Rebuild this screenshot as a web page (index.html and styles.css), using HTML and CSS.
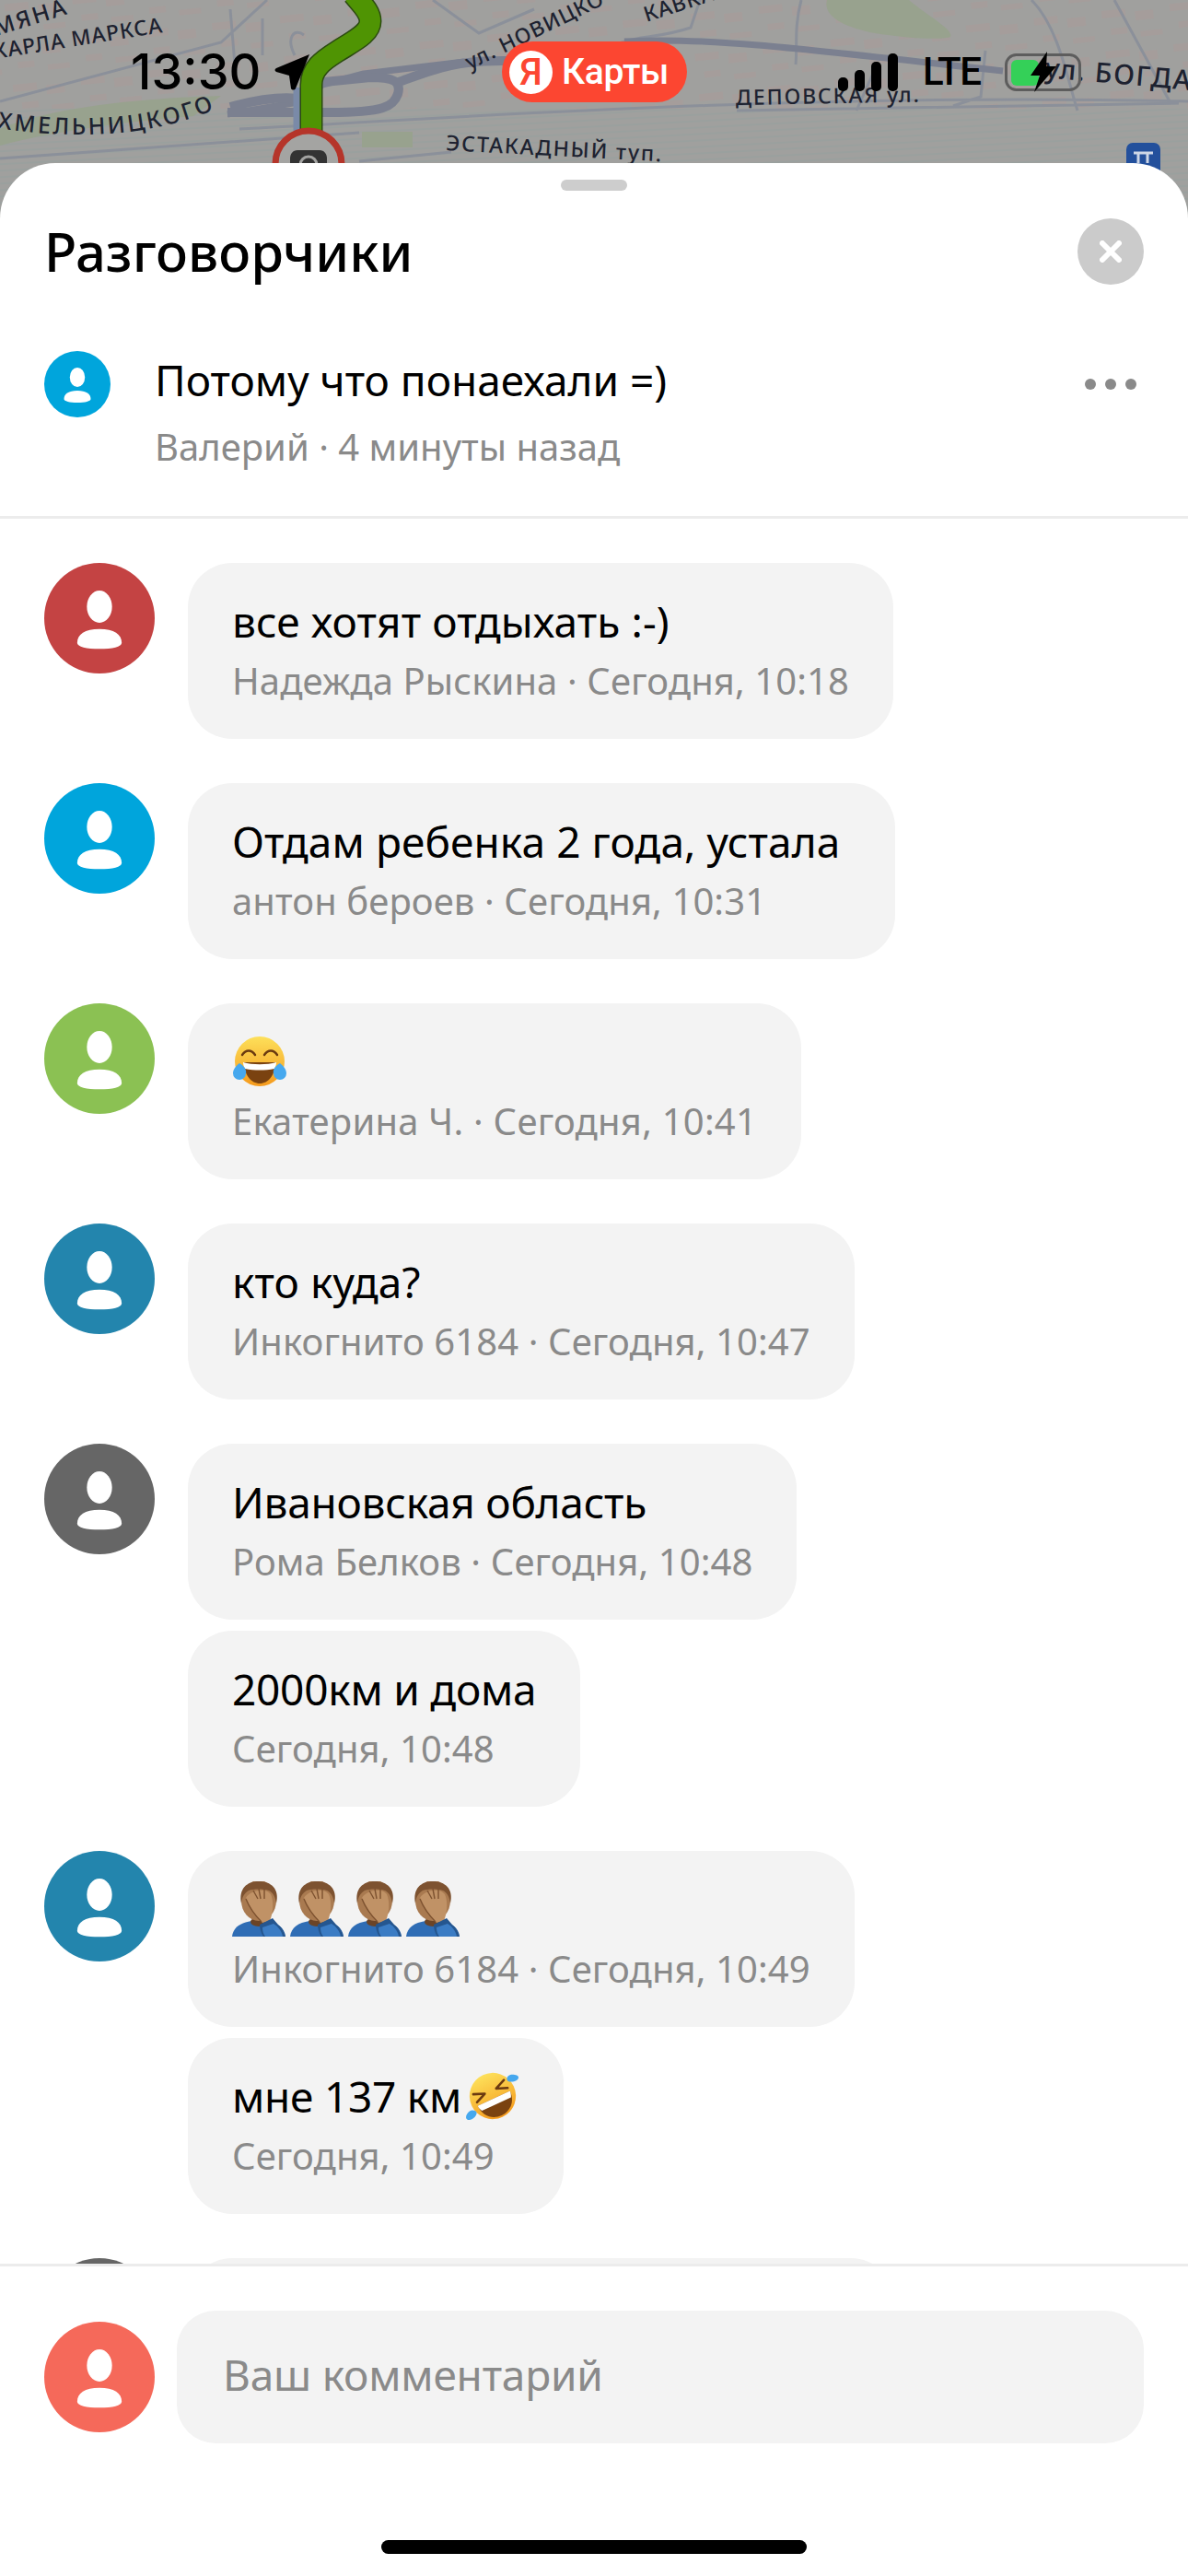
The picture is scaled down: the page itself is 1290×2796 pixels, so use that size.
FILE: index.html
```html
<!DOCTYPE html>
<html lang="ru">
<head>
<meta charset="utf-8">
<title>Разговорчики</title>
<link rel="stylesheet" href="styles.css">
</head>
<body>
<svg class="defs" width="0" height="0" aria-hidden="true">
  <symbol id="person" viewBox="0 0 72 72">
    <ellipse cx="36" cy="28.5" rx="8.2" ry="10.5"/>
    <path d="M21.5 52c0-5.5 5-9 14.5-9s14.5 3.500 14.500 9c0 2.500-6 4-14.500 4s-14.500-1.500-14.500-4z"/>
  </symbol>
  <symbol id="facepalm" viewBox="0 0 58 60">
    <path fill="#2f6db5" d="M0 60c1-10 9-15 21-17h16c12 2 20 7 21 17z"/>
    <ellipse cx="29" cy="44" rx="9" ry="5" fill="#6b4427"/>
    <ellipse cx="29" cy="21" rx="19" ry="22" fill="#a97a50"/>
    <path fill="#7d5230" d="M10 24C7 8 16 0 29 0s23 8 19 24c-1-8-4-12-8-14-7-2-16-2-22 0-5 3-7 7-8 14z"/>
    <path fill="#c09266" d="M15 18c4-8 22-12 27-4 4 9 2 22-1 29l-8 2c-6-7-14-16-18-27z"/>
    <path fill="none" stroke="#7d5230" stroke-width="1.4" d="M23 10l5 9M29 8l2 11M35 9l0 10M15 19c4 10 10 18 17 25"/>
    <path fill="#25568f" d="M30 47l14-7 6 7c4 3 7 8 8 13H34c-3-4-4-9-4-13z"/>
    <path fill="#3b7cc4" d="M33 50l12-4c5 3 9 8 10 14H36c-2-3-3-6-3-10z"/>
  </symbol>
</svg>

<div class="phone">
  <div class="map">
    <svg class="map-art" viewBox="0 0 1290 240" width="1290" height="240" aria-hidden="true">
      <defs>
        <pattern id="blocks" width="74" height="44" patternUnits="userSpaceOnUse" patternTransform="rotate(-6)">
          <rect x="4" y="5" width="26" height="8" class="block"/>
          <rect x="40" y="9" width="20" height="10" class="block"/>
          <rect x="12" y="25" width="18" height="7" class="block"/>
          <rect x="44" y="31" width="24" height="6" class="block"/>
        </pattern>
        <pattern id="rail" width="12" height="7" patternUnits="userSpaceOnUse" patternTransform="rotate(-3)">
          <path d="M0 3h12" class="rail"/>
        </pattern>
        <path id="hmel" d="M-3 139C70 150 160 152 240 116"/>
      </defs>
      <rect width="1290" height="240" class="land"/>
      <rect width="1290" height="118" fill="url(#blocks)"/>
      <rect y="118" width="1290" height="122" fill="url(#rail)"/>
      <path class="park" d="M898 0c-5 18 20 30 52 36 30 5 72 8 82 4 4-8-24-22-45-40z"/>
      <path class="park" d="M0 140c60-26 170-34 240-36l-30 22c-70 6-150 16-210 32zM393 143h55v17h-55z"/>
      <path class="thin" d="M0 110L240 46 290 0M250 10l5 60M285 20l0 40M320 60c-10-20 0-30 10-22M470 0l50 36 60-26M645 60c40-25 60-15 105-30l10-30M870 0c-8 30-4 50-6 70M1120 0c30 30 40 90 50 120M1210 0l60 110M950 75l-20 45M1070 55l-5 50-30 10M260 140c200-10 600-40 1030-30M0 172l390-28M390 175l100-10M800 120l480-8"/>
      <path class="road" d="M678 45c80-5 170 5 411 32M504 67L395 80 350 92 330 110 270 120 247 124"/>
      <path class="road road-thick" d="M247 122h110c60 0 70-6 75-20 4-14-5-18-30-18l-60 6M330 108c-20-4-50 0-80 8M430 90c40-14 60-24 115-24h40"/>
      <path class="route-side" d="M323 95v47"/>
      <path class="route-edge" d="M338 142V92C338 75 350 66 366 56 385 44 402 36 402 23 402 12 392 4 384-6"/>
      <path class="route" d="M338 142V92C338 75 350 66 366 56 385 44 402 36 402 23 402 12 392 4 384-6"/>
      <circle cx="335" cy="178" r="36" class="cam-ring"/>
      <path class="cam" d="M315 172c0-5 3-9 8-9h24c5 0 8 4 8 9v30h-40z"/>
      <circle cx="335" cy="179" r="9" class="cam-lens"/>
      <rect x="1223" y="155" width="37" height="40" rx="7" class="metro"/>
      <path class="metro-mark" d="M1231 166h21M1236 166v11M1246 166v11"/>
      <text class="lbl" transform="translate(-4 39) rotate(-17)">МЯНА</text>
      <text class="lbl lbl-n" transform="translate(-6 64) rotate(-9)">КАРЛА МАРКСА</text>
      <text class="lbl lbl-h"><textPath href="#hmel">ХМЕЛЬНИЦКОГО</textPath></text>
      <text class="lbl lbl-n" transform="translate(510 76) rotate(-26)">ул. НОВИЦКО</text>
      <text class="lbl lbl-n" transform="translate(702 24) rotate(-18)">КАВКА</text>
      <text class="lbl lbl-w" transform="translate(484 163) rotate(3)">ЭСТАКАДНЫЙ туп.</text>
      <text class="lbl lbl-w" transform="translate(799 114) rotate(-1)">ДЕПОВСКАЯ ул.</text>
      <text class="lbl lbl-b" transform="translate(1134 84) rotate(5)">ул. БОГДА</text>
    </svg>
    <div class="statusbar">
      <div class="sb-left">
        <span class="time">13:30</span>
        <svg class="loc" viewBox="0 0 40 40" width="40" height="40" aria-hidden="true"><path d="M38 1L23 38c-1 2-4 2-5 0l-2-14-14-4c-2-1-2-3 0-4z"/></svg>
      </div>
      <div class="pill">
        <span class="ya-badge">Я</span>
        <span class="pill-text">Карты</span>
      </div>
      <div class="sb-right">
        <div class="signal"><i class="b1"></i><i class="b2"></i><i class="b3"></i><i class="b4"></i></div>
        <span class="lte">LTE</span>
        <svg class="battery" viewBox="0 0 84 44" width="84" height="44" aria-hidden="true">
          <rect x="1.5" y="3.5" width="80" height="38" rx="11" class="bat-out"/>
          <rect x="7" y="9" width="30" height="28" rx="6" class="bat-fill"/>
          <path class="bat-bolt" d="M46 0L28 26h10l-6 18 24-28H45z"/>
        </svg>
      </div>
    </div>
  </div>

  <section class="sheet">
    <div class="handle"></div>
    <header class="sheet-head">
      <h1 class="title">Разговорчики</h1>
      <button class="close" aria-label="Закрыть">
        <svg viewBox="0 0 24 24" width="24" height="24" aria-hidden="true"><path d="M3 3l18 18M21 3L3 21"/></svg>
      </button>
    </header>
    <div class="post">
      <svg class="ava ava-sm c-blue"><use href="#person"/></svg>
      <div class="post-body">
        <p class="post-text">Потому что понаехали =)</p>
        <p class="post-meta">Валерий · 4 минуты назад</p>
      </div>
      <div class="dots"><i></i><i></i><i></i></div>
    </div>

    <div class="feed">
      <div class="group">
        <svg class="ava c-red"><use href="#person"/></svg>
        <div class="bubbles">
          <div class="bubble"><div class="msg">все хотят отдыхать :-)</div><div class="meta">Надежда Рыскина · Сегодня, 10:18</div></div>
        </div>
      </div>
      <div class="group">
        <svg class="ava c-blue"><use href="#person"/></svg>
        <div class="bubbles">
          <div class="bubble bubble-wide"><div class="msg">Отдам ребенка 2 года, устала</div><div class="meta">антон бероев · Сегодня, 10:31</div></div>
        </div>
      </div>
      <div class="group">
        <svg class="ava c-green"><use href="#person"/></svg>
        <div class="bubbles">
          <div class="bubble">
            <div class="msg">
              <svg class="emoji" viewBox="0 0 60 56" width="60" height="56" role="img" aria-label="😂">
                <defs><linearGradient id="face1" x1="0" y1="0" x2="0" y2="1"><stop offset="0" stop-color="#fde05a"/><stop offset="1" stop-color="#f59a1c"/></linearGradient></defs>
                <circle cx="30" cy="28" r="27" fill="url(#face1)"/>
                <path d="M11 21c4-6 10-6 14 0M35 21c4-6 10-6 14 0" fill="none" stroke="#6b3a10" stroke-width="2.4" stroke-linecap="round"/>
                <path d="M13 29h34c0 14-8 23-17 23s-17-9-17-23z" fill="#7a4210"/>
                <path d="M12 29c10 3 26 3 36 0 0 3-1 5-2 7-10 2-22 2-32 0-1-2-2-4-2-7z" fill="#fff"/>
                <path d="M8 30c5 3 8 7 7 11a7 7 0 01-14 0c0-4 3-8 7-11zM52 30c4 3 7 7 7 11a7 7 0 01-14 0c-1-4 2-8 7-11z" fill="#46a8ee"/>
              </svg>
            </div>
            <div class="meta meta-wide">Екатерина Ч. · Сегодня, 10:41</div>
          </div>
        </div>
      </div>
      <div class="group">
        <svg class="ava c-teal"><use href="#person"/></svg>
        <div class="bubbles">
          <div class="bubble"><div class="msg">кто куда?</div><div class="meta">Инкогнито 6184 · Сегодня, 10:47</div></div>
        </div>
      </div>
      <div class="group">
        <svg class="ava c-gray"><use href="#person"/></svg>
        <div class="bubbles">
          <div class="bubble"><div class="msg tight">Ивановская область</div><div class="meta">Рома Белков · Сегодня, 10:48</div></div>
          <div class="bubble"><div class="msg tight">2000км и дома</div><div class="meta">Сегодня, 10:48</div></div>
        </div>
      </div>
      <div class="group">
        <svg class="ava c-teal"><use href="#person"/></svg>
        <div class="bubbles">
          <div class="bubble">
            <div class="msg palms">
              <svg class="palm" width="58" height="60" role="img" aria-label="🤦🏽‍♂️"><use href="#facepalm"/></svg>
              <svg class="palm" width="58" height="60" role="img" aria-label="🤦🏽‍♂️"><use href="#facepalm"/></svg>
              <svg class="palm" width="58" height="60" role="img" aria-label="🤦🏽‍♂️"><use href="#facepalm"/></svg>
              <svg class="palm" width="58" height="60" role="img" aria-label="🤦🏽‍♂️"><use href="#facepalm"/></svg>
            </div>
            <div class="meta">Инкогнито 6184 · Сегодня, 10:49</div>
          </div>
          <div class="bubble">
            <div class="msg tight">мне 137 км<svg class="emoji emoji-in" viewBox="0 0 60 56" width="58" height="56" role="img" aria-label="🤣">
                <defs><linearGradient id="face2" x1="0" y1="0" x2="0" y2="1"><stop offset="0" stop-color="#fde05a"/><stop offset="1" stop-color="#f59a1c"/></linearGradient></defs>
                <g transform="rotate(-25 30 28)">
                  <circle cx="30" cy="28" r="26" fill="url(#face2)"/>
                  <path d="M11 17l12 5-12 5M49 17l-12 5 12 5" fill="none" stroke="#6b3a10" stroke-width="2.6" stroke-linecap="round" stroke-linejoin="round"/>
                  <path d="M10 31h40c0 13-9 21-20 21s-20-8-20-21z" fill="#7a4210"/>
                  <path d="M10 31h40c0 3-1 5-2 7H12c-1-2-2-4-2-7z" fill="#fff"/>
                </g>
                <path d="M52 4c4 0 7 1 7 3 0 3-4 5-8 5-3 0-5-1-5-3 0-3 3-5 6-5zM7 44c3 0 5 1 5 3 0 4-5 8-8 8-2 0-4-1-4-3 0-4 4-8 7-8z" fill="#46a8ee"/>
              </svg></div>
            <div class="meta">Сегодня, 10:49</div>
          </div>
        </div>
      </div>
      <div class="group">
        <svg class="ava c-gray"><use href="#person"/></svg>
        <div class="bubbles">
          <div class="bubble bubble-wide"></div>
        </div>
      </div>
    </div>

    <footer class="composer">
      <svg class="ava c-coral"><use href="#person"/></svg>
      <div class="input">Ваш комментарий</div>
    </footer>
    <div class="home-wrap"><div class="home"></div></div>
  </section>
</div>
</body>
</html>
```
FILE: styles.css
```css
* { box-sizing: border-box; }
html, body { margin: 0; padding: 0; background: #fff; }
body { font-family: "Noto Sans", "Open Sans", sans-serif; color: #000; }
p, h1 { margin: 0; }
.defs { position: absolute; }

.phone {
  width: 1290px;
  height: 2796px;
  overflow: hidden;
  display: flex;
  flex-direction: column;
}

/* map */
.map { position: relative; height: 240px; margin-bottom: -63px; flex: none; }
.map-art { display: block; }
.land { fill: #a0a09e; }
.block { fill: #a59d9b; }
.rail { stroke: #98a09d; stroke-width: 1.5; fill: none; }
.park { fill: #98a28e; }
.thin { fill: none; stroke: #8b909a; stroke-width: 3; }
.road { fill: none; stroke: #7b8090; stroke-width: 7; stroke-linejoin: round; }
.road-thick { stroke-width: 10; }
.route-side { stroke: #7a8aa8; stroke-width: 9; fill: none; }
.route-edge { fill: none; stroke: #2b4a10; stroke-width: 25; }
.route { fill: none; stroke: #4f9403; stroke-width: 22; }
.cam-ring { fill: #a4a4a2; stroke: #b5352a; stroke-width: 7; }
.cam { fill: #333; }
.cam-lens { fill: #333; stroke: #a4a4a2; stroke-width: 3; }
.metro { fill: #23509c; }
.metro-mark { fill: none; stroke: #cdd6e6; stroke-width: 3; }
.lbl {
  font-family: "Noto Sans", sans-serif;
  font-size: 25px;
  letter-spacing: 2.2px;
  font-weight: 500;
  fill: #1d2230;
}
.lbl-n { font-size: 23px; letter-spacing: 1px; }
.lbl-h { letter-spacing: 2.8px; }
.lbl-w { font-size: 23px; letter-spacing: 1.9px; }
.lbl-b { font-size: 30px; letter-spacing: 1.5px; }

/* status bar */
.statusbar {
  position: absolute;
  top: 45px;
  left: 0;
  width: 100%;
  height: 66px;
  display: grid;
  grid-template-columns: 545px 201px 1fr;
  align-items: center;
}
.sb-left { display: flex; align-items: center; padding-left: 142px; gap: 15px; }
.time {
  font-family: Inter, sans-serif;
  font-size: 54px;
  font-weight: 500;
  line-height: 66px;
  letter-spacing: 0;
}
.loc { fill: #000; flex: none; }
.pill {
  height: 66px;
  border-radius: 33px;
  background: #fc4631;
  display: flex;
  align-items: center;
  padding-left: 8px;
  gap: 10px;
  color: #fff;
}
.ya-badge {
  width: 47px;
  height: 47px;
  border-radius: 50%;
  background: #fff;
  color: #fc4631;
  font-family: "Roboto", sans-serif;
  font-weight: 500;
  font-size: 40px;
  line-height: 47px;
  text-align: center;
}
.pill-text { font-family: "Roboto", sans-serif; font-weight: 500; font-size: 39px; line-height: 47px; letter-spacing: -0.3px; }
.sb-right { display: flex; align-items: center; padding-left: 164px; height: 66px; }
.signal { display: flex; align-items: flex-end; gap: 7px; height: 42px; }
.signal i { display: block; width: 11px; border-radius: 5px; background: #000; }
.signal .b1 { height: 15px; }
.signal .b2 { height: 23px; }
.signal .b3 { height: 32px; }
.signal .b4 { height: 41px; }
.lte {
  font-family: "Roboto", sans-serif;
  font-size: 42px;
  font-weight: 500;
  line-height: 42px;
  letter-spacing: -1.5px;
  margin-left: 27px;
  width: 61px;
}
.battery { margin-left: 28px; flex: none; }
.bat-out { fill: none; stroke: #5d5d5d; stroke-width: 3; }
.bat-fill { fill: #34d058; }
.bat-bolt { fill: #000; }

/* sheet */
.sheet {
  position: relative;
  flex: 1;
  min-height: 0;
  background: #fff;
  border-radius: 60px 60px 0 0;
  display: flex;
  flex-direction: column;
}
.handle {
  flex: none;
  width: 72px;
  height: 12px;
  margin: 18px auto 0;
  border-radius: 6px;
  background: #cdcdcd;
}
.sheet-head {
  flex: none;
  height: 72px;
  margin-top: 30px;
  padding: 0 48px;
  display: flex;
  align-items: center;
  justify-content: space-between;
}
.title { font-size: 58px; font-weight: 500; line-height: 72px; }
.close {
  width: 72px;
  height: 72px;
  border: 0;
  padding: 0;
  border-radius: 50%;
  background: #cbcbcb;
  display: flex;
  align-items: center;
  justify-content: center;
}
.close path { fill: none; stroke: #fff; stroke-width: 6; stroke-linecap: round; }

.post {
  flex: none;
  height: 254px;
  display: flex;
  align-items: flex-start;
  padding: 72px 48px 0;
  border-bottom: 3px solid #ececec;
}
.post-body { flex: 1; margin-left: 48px; }
.post-text { font-size: 46px; line-height: 68px; margin-top: -3px; }
.post-meta { font-size: 40px; line-height: 68px; margin-top: 5px; color: #8a8a8a; }
.dots { display: flex; gap: 10px; margin-top: 30px; margin-right: 8px; }
.dots i { display: block; width: 12px; height: 12px; border-radius: 50%; background: #8a8a8a; }

/* avatars */
.ava { display: block; flex: none; width: 120px; height: 120px; border-radius: 50%; fill: #fff; }
.ava-sm { width: 72px; height: 72px; }
.c-blue { background: #00a5dc; }
.c-red { background: #c44343; }
.c-green { background: #8bc153; }
.c-teal { background: #2385ad; }
.c-gray { background: #666666; }
.c-coral { background: #f5695a; }

/* feed */
.feed {
  flex: 1;
  min-height: 0;
  overflow: hidden;
  padding: 48px 48px 0;
  display: flex;
  flex-direction: column;
  gap: 48px;
}
.group { flex: none; display: flex; gap: 36px; align-items: flex-start; }
.bubbles { display: flex; flex-direction: column; align-items: flex-start; gap: 12px; }
.bubble {
  height: 191px;
  padding: 33px 48px 0;
  border-radius: 48px;
  background: #f3f3f3;
}
.bubble-wide { width: 768px; }
.msg { display: flex; align-items: center; height: 60px; font-size: 46px; line-height: 60px; white-space: nowrap; letter-spacing: 0.1px; }
.tight { letter-spacing: -0.25px; }
.meta { font-size: 40px; line-height: 60px; margin-top: 5px; color: #8a8a8a; white-space: nowrap; letter-spacing: 0.1px; }
.meta-wide { letter-spacing: 0.22px; }
.emoji { display: block; flex: none; }
.emoji-in { margin-left: 5px; }
.palms { gap: 5px; align-items: flex-end; }
.palm { display: block; flex: none; fill: #000; }

/* composer */
.composer {
  flex: none;
  height: 195px;
  padding: 48px 48px 0;
  border-top: 3px solid #ececec;
  display: flex;
  align-items: flex-start;
  gap: 24px;
  background: #fff;
}
.composer .ava { margin-top: 12px; }
.input {
  flex: 1;
  height: 144px;
  border-radius: 42px;
  background: #f3f3f3;
  padding: 0 50px 6px;
  display: flex;
  align-items: center;
  font-size: 46px;
  letter-spacing: -0.2px;
  color: #8a8a8a;
}
.home-wrap { flex: none; height: 144px; padding-top: 105px; }
.home { width: 462px; height: 15px; margin: 0 auto; border-radius: 8px; background: #000; }
```
